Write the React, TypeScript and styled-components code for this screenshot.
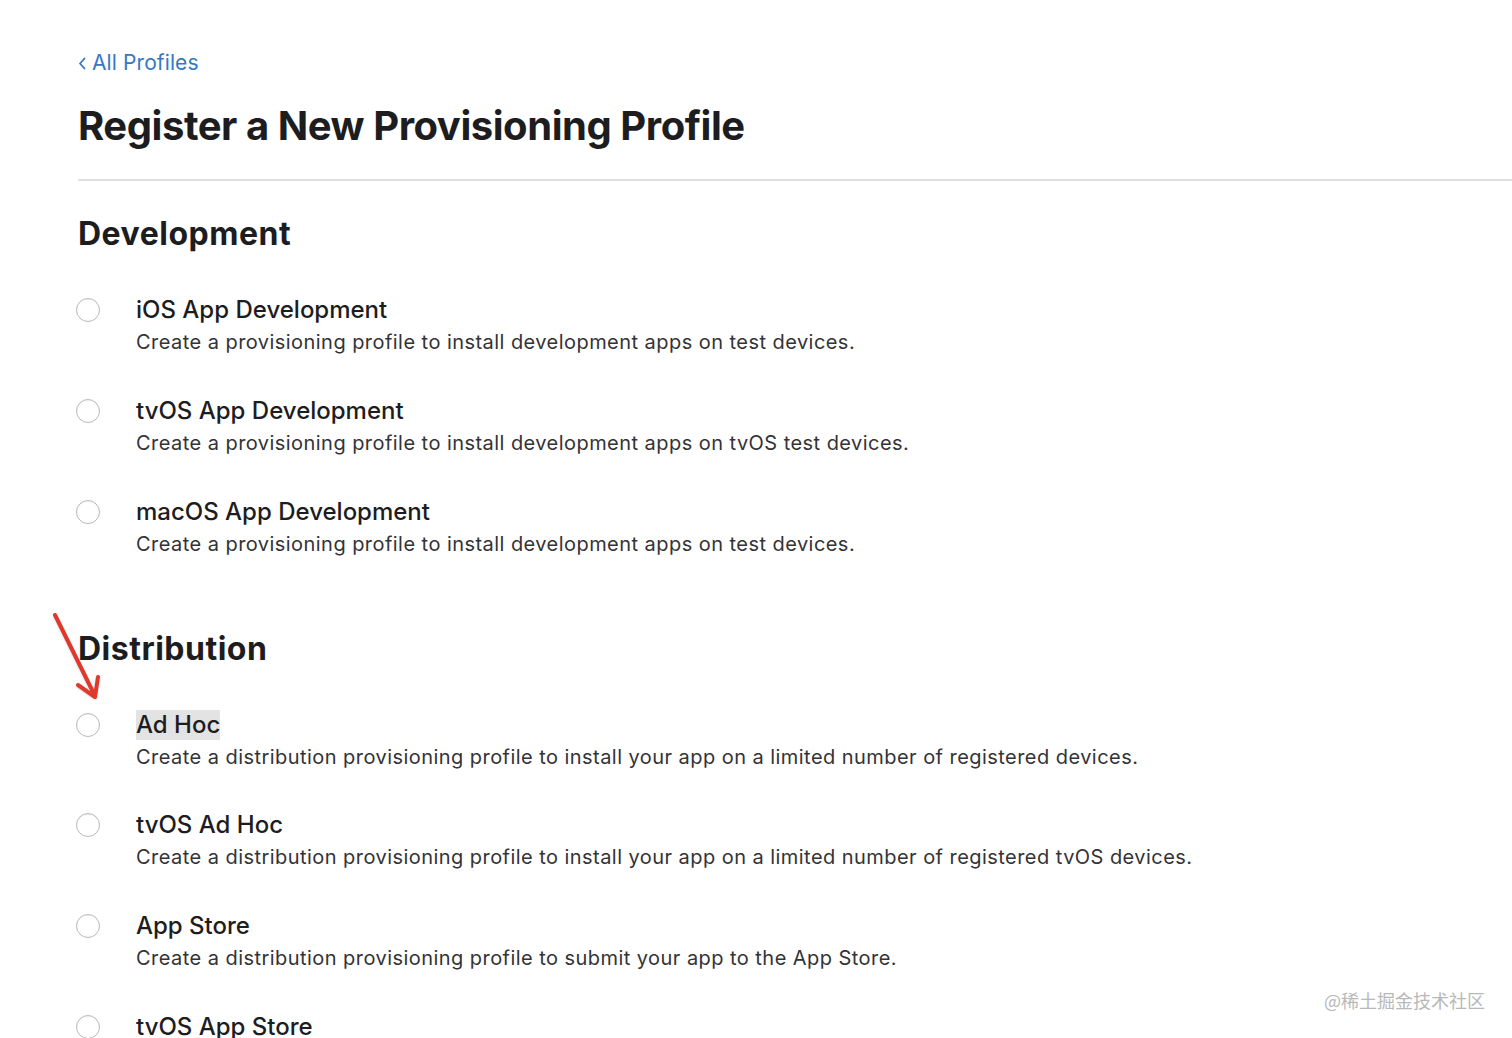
import React from 'react';
import styled, { createGlobalStyle } from 'styled-components';

const GlobalStyle = createGlobalStyle`
  html, body {
    margin: 0;
    padding: 0;
    background: #ffffff;
    overflow: hidden;
  }
  body {
    font-family: Inter, "Noto Sans", "Liberation Sans", sans-serif;
    color: #1d1d1f;
    -webkit-font-smoothing: antialiased;
  }
`;

const Page = styled.div`
  position: relative;
  width: 1512px;
  height: 1038px;
  overflow: hidden;
  box-sizing: border-box;
  padding: 50px 0 0 78px;
`;

const BackLink = styled.a`
  display: inline-flex;
  align-items: center;
  gap: 6px;
  font-size: 21px;
  line-height: 26px;
  letter-spacing: 0.1px;
  color: #3677c4;
  text-decoration: none;
  cursor: pointer;
`;

const Title = styled.h1`
  margin: 26px 0 0;
  font-size: 40px;
  line-height: 48px;
  font-weight: 700;
  letter-spacing: -0.45px;
  color: #1d1d1f;
`;

const Divider = styled.hr`
  margin: 29px 0 0;
  border: 0;
  height: 2px;
  background: #e0e0e0;
`;

const Section = styled.section<{ $top: number }>`
  margin-top: ${(p) => p.$top}px;
`;

const SectionHeading = styled.h2`
  margin: 0;
  font-size: 32px;
  line-height: 40px;
  font-weight: 700;
  letter-spacing: 0.5px;
  color: #1d1d1f;
`;

const OptionList = styled.div`
  display: flex;
  flex-direction: column;
  gap: 38.8px;
  margin-top: 41px;
  margin-left: -2px;
`;

const OptionRow = styled.label`
  display: flex;
  align-items: flex-start;
  cursor: pointer;
`;

const Radio = styled.span`
  flex: none;
  width: 22px;
  height: 22px;
  margin-top: 3px;
  margin-right: 36px;
  border-radius: 50%;
  border: 1px solid #b9b9b9;
  background: #fff;
  box-shadow: inset 0 1px 1px rgba(0, 0, 0, 0.06);
`;

const OptionText = styled.div`
  display: flex;
  flex-direction: column;
`;

const OptionTitle = styled.span<{ $highlight?: boolean }>`
  align-self: flex-start;
  font-size: 24px;
  line-height: 30px;
  font-weight: 500;
  color: #1d1d1f;
  background: ${(p) => (p.$highlight ? '#e3e3e3' : 'transparent')};
`;

const OptionDesc = styled.span`
  margin-top: 2px;
  font-size: 20px;
  line-height: 30px;
  letter-spacing: 0.45px;
  color: #333336;
`;

const Arrow = styled.svg`
  position: absolute;
  left: 48px;
  top: 608px;
  filter: drop-shadow(0 1px 1px rgba(0, 0, 0, 0.15));
`;

const Watermark = styled.div`
  position: absolute;
  right: 27px;
  top: 988px;
  font-family: "Noto Sans CJK SC", "Noto Sans", sans-serif;
  font-size: 18px;
  line-height: 24px;
  color: #b8b8b8;
`;

type Option = { title: string; desc: string; highlight?: boolean };

const development: Option[] = [
  { title: 'iOS App Development', desc: 'Create a provisioning profile to install development apps on test devices.' },
  { title: 'tvOS App Development', desc: 'Create a provisioning profile to install development apps on tvOS test devices.' },
  { title: 'macOS App Development', desc: 'Create a provisioning profile to install development apps on test devices.' },
];

const distribution: Option[] = [
  {
    title: 'Ad Hoc',
    desc: 'Create a distribution provisioning profile to install your app on a limited number of registered devices.',
    highlight: true,
  },
  {
    title: 'tvOS Ad Hoc',
    desc: 'Create a distribution provisioning profile to install your app on a limited number of registered tvOS devices.',
  },
  { title: 'App Store', desc: 'Create a distribution provisioning profile to submit your app to the App Store.' },
  { title: 'tvOS App Store', desc: 'Create a distribution provisioning profile to submit your tvOS app to the App Store.' },
];

const Options: React.FC<{ items: Option[] }> = ({ items }) => (
  <OptionList>
    {items.map((o) => (
      <OptionRow key={o.title}>
        <Radio />
        <OptionText>
          <OptionTitle $highlight={o.highlight}>{o.title}</OptionTitle>
          <OptionDesc>{o.desc}</OptionDesc>
        </OptionText>
      </OptionRow>
    ))}
  </OptionList>
);

export default function App() {
  return (
    <>
      <GlobalStyle />
      <Page>
        <BackLink>
          <svg width="8" height="13" viewBox="0 0 8 13">
            <path d="M6.5 1.5 L2 6.5 L6.5 11.5" fill="none" stroke="#3677c4" strokeWidth="1.8" strokeLinecap="round" strokeLinejoin="round" />
          </svg>
          All Profiles
        </BackLink>
        <Title>Register a New Provisioning Profile</Title>
        <Divider />

        <Section $top={33}>
          <SectionHeading>Development</SectionHeading>
          <Options items={development} />
        </Section>

        <Section $top={70}>
          <SectionHeading>Distribution</SectionHeading>
          <Options items={distribution} />
        </Section>

        <Arrow width="60" height="96" viewBox="0 0 60 96">
          <path d="M7 7 L47 88" stroke="#e0382c" strokeWidth="4" strokeLinecap="round" />
          <path d="M30 77 L47 89 L50 69" fill="none" stroke="#e0382c" strokeWidth="4" strokeLinecap="round" strokeLinejoin="round" />
        </Arrow>

        <Watermark>@稀土掘金技术社区</Watermark>
      </Page>
    </>
  );
}
